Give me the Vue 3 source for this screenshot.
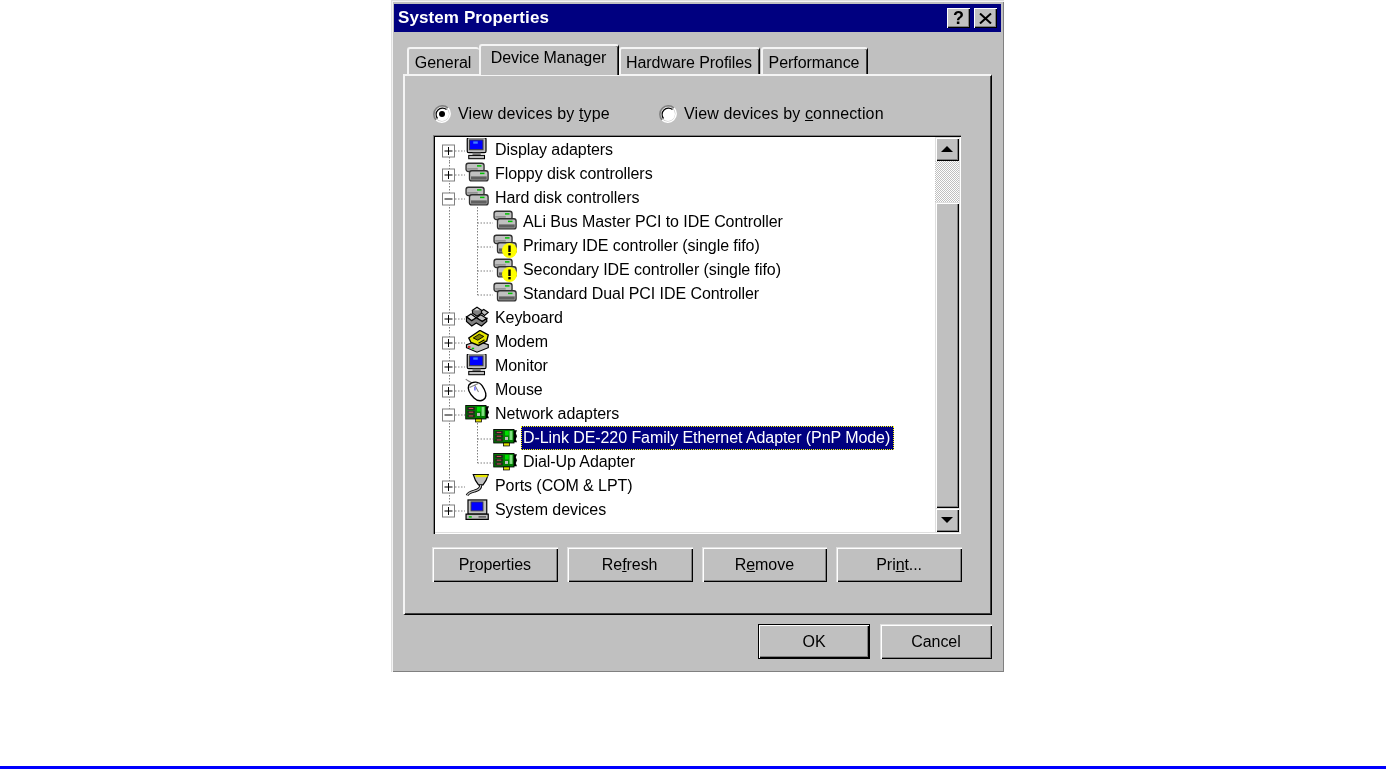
<template>
  <div class="page">
    <svg class="sprite" width="0" height="0" aria-hidden="true">
      <defs>
        <symbol id="monitor" viewBox="0 0.7 16 16">
          <rect x="1.500" y="0.500" width="12.500" height="10" rx="1" fill="#c0c0c0" stroke="#000" stroke-width="0.8" />
          <rect x="3" y="2" width="9" height="6.500" fill="#0000ff" stroke="#404040" stroke-width="0.7" />
          <rect x="5.500" y="3" width="3" height="1.500" fill="#4080ff" />
          <rect x="5" y="10.500" width="5.500" height="1.800" fill="#808080" />
          <rect x="2.500" y="12.300" width="10.500" height="2.200" fill="#c0c0c0" stroke="#000" stroke-width="0.7" />
        </symbol>
        <symbol id="disk" viewBox="0 0.7 16 16">
          <rect x="0.700" y="1.500" width="12" height="5.500" rx="1.500" fill="#c0c0c0" stroke="#303030" stroke-width="0.9" />
          <rect x="8" y="2.800" width="3" height="1" fill="#00c000" />
          <path d="M1.500 5.300h7" stroke="#808080" stroke-width="0.8" />
          <rect x="3" y="6.500" width="12.400" height="6.800" rx="1.500" fill="#c0c0c0" stroke="#303030" stroke-width="0.9" />
          <rect x="10" y="7.800" width="3" height="1" fill="#00c000" />
          <rect x="4" y="10.300" width="10.500" height="2.200" fill="#606060" />
        </symbol>
        <symbol id="network" viewBox="0 0.7 16 16">
          <rect x="0.500" y="3" width="13.500" height="9" fill="#008000" stroke="#000" stroke-width="0.6" />
          <rect x="1.500" y="4" width="5" height="2" fill="#202020" />
          <rect x="1.500" y="6.500" width="5" height="2" fill="#202020" />
          <rect x="1.500" y="9" width="5" height="2" fill="#202020" />
          <path d="M2.500 5h3M2.500 7.500h3M2.500 10h3" stroke="#e06060" stroke-width="0.6" />
          <rect x="8" y="4" width="2.500" height="3" fill="#00e000" />
          <rect x="8" y="8" width="2" height="2" fill="#c0c0c0" />
          <rect x="11" y="4" width="2" height="6" fill="#80e080" />
          <rect x="7" y="12" width="4" height="2" fill="#e0e000" stroke="#000" stroke-width="0.5" />
          <path d="M14 3.500h2l-.8 2 .8 2-.8 2 .8 2h-2z" fill="#000" />
        </symbol>
        <symbol id="keyboard" viewBox="0 0.7 16 16">
          <path d="M5 3.500 8 1.500l3 2-3 2z" fill="#e0e0e0" stroke="#000" stroke-width="0.8" />
          <path d="M10 4.500l2.500-1.500 3 2-2.500 2z" fill="#c0c0c0" stroke="#000" stroke-width="0.8" />
          <path d="M5 3.500v2l3 2 3-2v-2" fill="#808080" stroke="#000" stroke-width="0.8" />
          <path d="M1 8l3-2 3.500 2.500-3 2z" fill="#e0e0e0" stroke="#000" stroke-width="0.8" />
          <path d="M7.500 8.500l3-2 4 2.500-3 2z" fill="#c0c0c0" stroke="#000" stroke-width="0.8" />
          <path d="M1 8v3l3.500 3 3-2 3.500 2 3.500-3V9l-3 2-4-2.500-3 2z" fill="#808080" stroke="#000" stroke-width="0.8" />
        </symbol>
        <symbol id="modem" viewBox="0 0.7 16 16">
          <path d="M1 10.500 8 8l7.500 2.500v2L8 15.500l-7-3z" fill="#c0c0c0" stroke="#000" stroke-width="0.8" />
          <path d="M2.500 6 10 1l5.500 3-1 4-5.500 3-5-2z" fill="#e8e800" stroke="#000" stroke-width="0.9" />
          <path d="M5.500 6l4-2.500 3 1.500-4 2.500z" fill="#808000" stroke="#000" stroke-width="0.6" />
          <path d="M9 9.500l4-2.300" stroke="#000" stroke-width="0.8" />
          <rect x="2" y="11.500" width="1.600" height="1" fill="#e00000" />
          <rect x="4.500" y="12.500" width="1.600" height="1" fill="#00c000" />
        </symbol>
        <symbol id="mouse" viewBox="0 0.7 16 16">
          <path d="M0.500 1.500c1.500 1.500 2.500 1 4 2.500" fill="none" stroke="#808080" stroke-width="0.8" />
          <path d="M2.500 5.500C5 2.500 9.500 3 11.500 6c2 3 3 6 2 8-1.500 2.500-5 2.500-7.500 0C3.500 11.500 1.500 8 2.500 5.500z" fill="#fff" stroke="#000" stroke-width="0.9" />
          <path d="M3 7 9.500 4M6.500 5.500 9 10" stroke="#808080" stroke-width="0.7" fill="none" />
          <rect x="6" y="6.500" width="1.200" height="2.500" fill="#8080ff" />
        </symbol>
        <symbol id="port" viewBox="0 0.7 16 16">
          <path d="M5.500 1h10l-1.500 4-2 3H9L7 5z" fill="#c0c0c0" stroke="#000" stroke-width="0.8" />
          <rect x="7" y="1.300" width="8" height="1.500" fill="#e8e800" />
          <path d="M10.500 8c0 2.500-2 3.500-4 4S2 13 1.500 15" fill="none" stroke="#000" stroke-width="2" />
          <path d="M10.500 8c0 2.500-2 3.500-4 4S2 13 1.500 15" fill="none" stroke="#c0c0c0" stroke-width="0.800" />
        </symbol>
        <symbol id="computer" viewBox="0 0.7 16 16">
          <rect x="2" y="2" width="12.500" height="9.500" fill="#c0c0c0" stroke="#000" stroke-width="0.8" />
          <rect x="4" y="3.300" width="8" height="6" fill="#0000ff" stroke="#404040" stroke-width="0.6" />
          <path d="M0.700 11.500h14.800v3.500H0.700z" fill="#c0c0c0" stroke="#000" stroke-width="0.8" />
          <rect x="2.500" y="12.800" width="2" height="1" fill="#00c000" />
          <path d="M9 13.300h5" stroke="#404040" stroke-width="0.8" />
        </symbol>
      </defs>
    </svg>

    <div class="dialog">
      <div class="titlebar">
        <span class="title">System Properties</span>
        <div class="caption-buttons">
          <button class="caption-btn help">?</button>
          <button class="caption-btn close">
            <svg width="13" height="11" viewBox="0 0 13 11">
              <path d="M1 0.500 12 10.500M12 0.500 1 10.500" fill="none" stroke="#000" stroke-width="2" />
            </svg>
          </button>
        </div>
      </div>

      <div class="content">
        <div class="tabs">
          <div class="tab general">General</div>
          <div class="tab active">Device Manager</div>
          <div class="tab hardware">Hardware Profiles</div>
          <div class="tab performance">Performance</div>
        </div>

        <div class="panel">
          <div class="radios">
            <label class="radio first">
              <svg class="radio-mark" width="18" height="18" viewBox="0 0 18 18">
                <circle cx="9" cy="9" r="7" fill="#fff" />
                <path d="M3 15A8.500 8.500 0 0 1 15 3" fill="none" stroke="#808080" stroke-width="1.500" />
                <path d="M4.500 13.500A6.400 6.400 0 0 1 13.500 4.500" fill="none" stroke="#000" stroke-width="1.200" />
                <path d="M15 3A8.500 8.500 0 0 1 3 15" fill="none" stroke="#fff" stroke-width="1.500" />
                <circle cx="9" cy="9" r="3" fill="#000" />
              </svg>
              <span>View devices by <u>t</u>ype</span>
            </label>
            <label class="radio">
              <svg class="radio-mark" width="18" height="18" viewBox="0 0 18 18">
                <circle cx="9" cy="9" r="7" fill="#fff" />
                <path d="M3 15A8.500 8.500 0 0 1 15 3" fill="none" stroke="#808080" stroke-width="1.500" />
                <path d="M4.500 13.500A6.400 6.400 0 0 1 13.500 4.500" fill="none" stroke="#000" stroke-width="1.200" />
                <path d="M15 3A8.500 8.500 0 0 1 3 15" fill="none" stroke="#fff" stroke-width="1.500" />
              </svg>
              <span>View devices by <u>c</u>onnection</span>
            </label>
          </div>

          <div class="listbox">
            <div class="tree">
              <div v-for="(row, i) in rows" :key="row.label" class="row">
                <svg class="gutter" :width="row.child ? 58 : 30" height="24">
                  <line x1="14.500" x2="14.500" :y1="i === 0 ? 13 : 0" :y2="i === rows.length - 1 ? 13 : 24" class="dots" />
                  <template v-if="row.child">
                    <line x1="42.500" x2="42.500" :y1="row.first ? -3 : 0" :y2="row.last ? 13 : 24" class="dots" />
                    <line x1="42.500" x2="58" y1="13" y2="13" class="dots" />
                  </template>
                  <template v-else>
                    <line x1="20" x2="30" y1="13" y2="13" class="dots" />
                    <rect x="7.500" y="7" width="12" height="12" fill="#fff" stroke="#808080" />
                    <line x1="9.500" x2="17.500" y1="13" y2="13" stroke="#000" />
                    <line v-if="!row.open" x1="13.500" x2="13.500" y1="9" y2="17" stroke="#000" />
                  </template>
                </svg>
                <span class="icon">
                  <svg width="24" height="24"><use :href="'#' + row.icon" /></svg>
                  <svg v-if="row.warn" class="warn" width="15" height="15" viewBox="0 0 15 15">
                    <circle cx="7.500" cy="7.500" r="7.500" fill="#ffff00" />
                    <rect x="6.300" y="2.500" width="2.400" height="6.500" fill="#000" />
                    <rect x="6.300" y="10" width="2.400" height="2.400" fill="#000" />
                  </svg>
                </span>
                <span class="label" :class="{ selected: row.selected }">{{ row.label }}</span>
              </div>
            </div>
            <div class="scrollbar">
              <button class="sb-btn"><i class="arrow up"></i></button>
              <div class="sb-track"></div>
              <div class="sb-thumb"></div>
              <button class="sb-btn"><i class="arrow down"></i></button>
            </div>
          </div>

          <div class="actions">
            <button class="btn">P<u>r</u>operties</button>
            <button class="btn">Re<u>f</u>resh</button>
            <button class="btn">R<u>e</u>move</button>
            <button class="btn">Pri<u>n</u>t...</button>
          </div>
        </div>

        <div class="footer">
          <button class="btn footer-btn default">OK</button>
          <button class="btn footer-btn">Cancel</button>
        </div>
      </div>
    </div>

    <div class="rule"></div>
  </div>
</template>

<script setup>
const rows = [
  { label: 'Display adapters', icon: 'monitor' },
  { label: 'Floppy disk controllers', icon: 'disk' },
  { label: 'Hard disk controllers', icon: 'disk', open: true },
  { label: 'ALi Bus Master PCI to IDE Controller', icon: 'disk', child: true, first: true },
  { label: 'Primary IDE controller (single fifo)', icon: 'disk', child: true, warn: true },
  { label: 'Secondary IDE controller (single fifo)', icon: 'disk', child: true, warn: true },
  { label: 'Standard Dual PCI IDE Controller', icon: 'disk', child: true, last: true },
  { label: 'Keyboard', icon: 'keyboard' },
  { label: 'Modem', icon: 'modem' },
  { label: 'Monitor', icon: 'monitor' },
  { label: 'Mouse', icon: 'mouse' },
  { label: 'Network adapters', icon: 'network', open: true },
  { label: 'D-Link DE-220 Family Ethernet Adapter (PnP Mode)', icon: 'network', child: true, first: true, selected: true },
  { label: 'Dial-Up Adapter', icon: 'network', child: true, last: true },
  { label: 'Ports (COM & LPT)', icon: 'port' },
  { label: 'System devices', icon: 'computer' }
]
</script>

<style>
html,
body {
  background: #fff;
  overflow: hidden;
}
</style>

<style scoped>
.page {
  height: 769px;
  display: flex;
  flex-direction: column;
  font-family: "Liberation Sans", Arial, sans-serif;
  font-size: 16px;
  letter-spacing: -0.07px;
  color: #000;
}

.sprite {
  position: absolute;
}

.dialog {
  width: 613px;
  height: 672px;
  margin-left: 391px;
  box-sizing: border-box;
  padding: 4px 3px 3px;
  background: #c0c0c0;
  box-shadow: inset 1px 1px 0 #dfdfdf, inset 2px 2px 0 #f4f4f4, inset -1px -1px 0 #808080;
  filter: blur(0.5px);
}

.titlebar {
  height: 28px;
  display: flex;
  align-items: center;
  justify-content: space-between;
  padding: 0 4px;
  background: #000080;
  color: #fff;
}

.title {
  font-weight: bold;
  font-size: 17px;
  letter-spacing: 0.1px;
}

.caption-buttons {
  display: flex;
  gap: 4px;
}

.caption-btn {
  width: 23px;
  height: 20px;
  padding: 0;
  border: 0;
  display: flex;
  align-items: center;
  justify-content: center;
  background: #c0c0c0;
  font: bold 18px "Liberation Sans", Arial, sans-serif;
  color: #000;
  box-shadow: inset 1px 1px 0 #fff, inset -1px -1px 0 #000, inset -2px -2px 0 #808080;
}

.content {
  padding: 12px 9px 0;
}

.tabs {
  height: 31px;
  display: flex;
  align-items: flex-end;
  padding-left: 4px;
  position: relative;
  z-index: 1;
  margin-bottom: -1px;
}

.tab {
  box-sizing: border-box;
  height: 27px;
  margin-bottom: 1px;
  padding: 3px 2px 0 0;
  text-align: center;
  line-height: 22px;
  border-radius: 3px 3px 0 0;
  background: #c0c0c0;
  border-top: 2px solid #f4f4f4;
  border-left: 2px solid #f4f4f4;
  border-right: 1px solid #000;
  box-shadow: inset -1px 0 0 #404040;
}

.general {
  width: 72px;
  border-right: 0;
  box-shadow: none;
}

.active {
  width: 140px;
  height: 31px;
  margin-bottom: 0;
  padding-top: 1px;
  position: relative;
  z-index: 1;
}

.hardware {
  width: 141px;
}

.performance {
  width: 107px;
  margin-left: 1px;
}

.panel {
  box-sizing: border-box;
  height: 541px;
  padding: 26px 29px 0 28px;
  background: #c0c0c0;
  border-top: 2px solid #f4f4f4;
  border-left: 2px solid #f4f4f4;
  border-right: 1px solid #000;
  border-bottom: 1px solid #000;
  box-shadow: inset -1px -1px 0 #404040;
}

.radios {
  height: 24px;
  display: flex;
  align-items: center;
}

.radio {
  display: flex;
  align-items: center;
  gap: 7px;
  letter-spacing: 0.13px;
}

.radio.first {
  width: 226px;
}

.radio-mark {
  flex: none;
}

.listbox {
  box-sizing: border-box;
  width: 528px;
  height: 399px;
  margin-top: 9px;
  padding: 2px;
  display: flex;
  background: #fff;
  box-shadow: inset 1px 1px 0 #808080, inset 2px 2px 0 #000, inset -1px -1px 0 #fff, inset -2px -2px 0 #dfdfdf;
}

.tree {
  flex: 1;
  min-width: 0;
  padding-top: 1px;
}

.row {
  height: 24px;
  display: flex;
  align-items: center;
}

.gutter {
  flex: none;
  overflow: visible;
}

.dots {
  stroke: #808080;
  stroke-width: 1;
  stroke-dasharray: 1.500 1.500;
}

.icon {
  flex: none;
  width: 24px;
  height: 24px;
  margin-right: 4px;
  position: relative;
}

.warn {
  position: absolute;
  left: 9px;
  top: 9px;
}

.label {
  height: 24px;
  line-height: 24px;
  padding: 0 4px 0 2px;
  box-sizing: border-box;
  white-space: nowrap;
}

.selected {
  background: #000080;
  color: #fff;
  outline: 1px dotted #ffff00;
  outline-offset: -1px;
}

.scrollbar {
  flex: none;
  width: 24px;
  display: flex;
  flex-direction: column;
}

.sb-btn,
.sb-thumb {
  background: #c0c0c0;
  box-shadow: inset 1px 1px 0 #dfdfdf, inset 2px 2px 0 #fff, inset -1px -1px 0 #000, inset -2px -2px 0 #808080;
}

.sb-btn {
  flex: none;
  height: 24px;
  padding: 0;
  border: 0;
  display: flex;
  align-items: center;
  justify-content: center;
}

.sb-track {
  flex: none;
  height: 41px;
  background-color: #c0c0c0;
  background-image: conic-gradient(#fff 25%, #c0c0c0 0 50%, #fff 0 75%, #c0c0c0 0);
  background-size: 2px 2px;
}

.sb-thumb {
  flex: 1;
}

.arrow {
  width: 0;
  height: 0;
  border-left: 6px solid transparent;
  border-right: 6px solid transparent;
}

.arrow.up {
  border-bottom: 6px solid #000;
}

.arrow.down {
  border-top: 6px solid #000;
}

.actions {
  display: flex;
  gap: 9px;
  margin-top: 13px;
  width: 530px;
  margin-left: -1px;
}

.btn {
  flex: 1;
  height: 35px;
  padding: 0;
  border: 0;
  background: #c0c0c0;
  font: 16px "Liberation Sans", Arial, sans-serif;
  letter-spacing: -0.07px;
  color: #000;
  box-shadow: inset 1px 1px 0 #dfdfdf, inset 2px 2px 0 #fff, inset -1px -1px 0 #000, inset -2px -2px 0 #808080;
}

.footer {
  display: flex;
  justify-content: flex-end;
  gap: 10px;
  margin-top: 9px;
}

.footer-btn {
  flex: none;
  width: 112px;
}

.default {
  box-shadow: inset 0 0 0 1px #000, inset 2px 2px 0 #fff, inset -2px -2px 0 #000, inset -3px -3px 0 #808080;
}

.rule {
  height: 3px;
  margin-top: auto;
  background: #0000ff;
}
</style>
